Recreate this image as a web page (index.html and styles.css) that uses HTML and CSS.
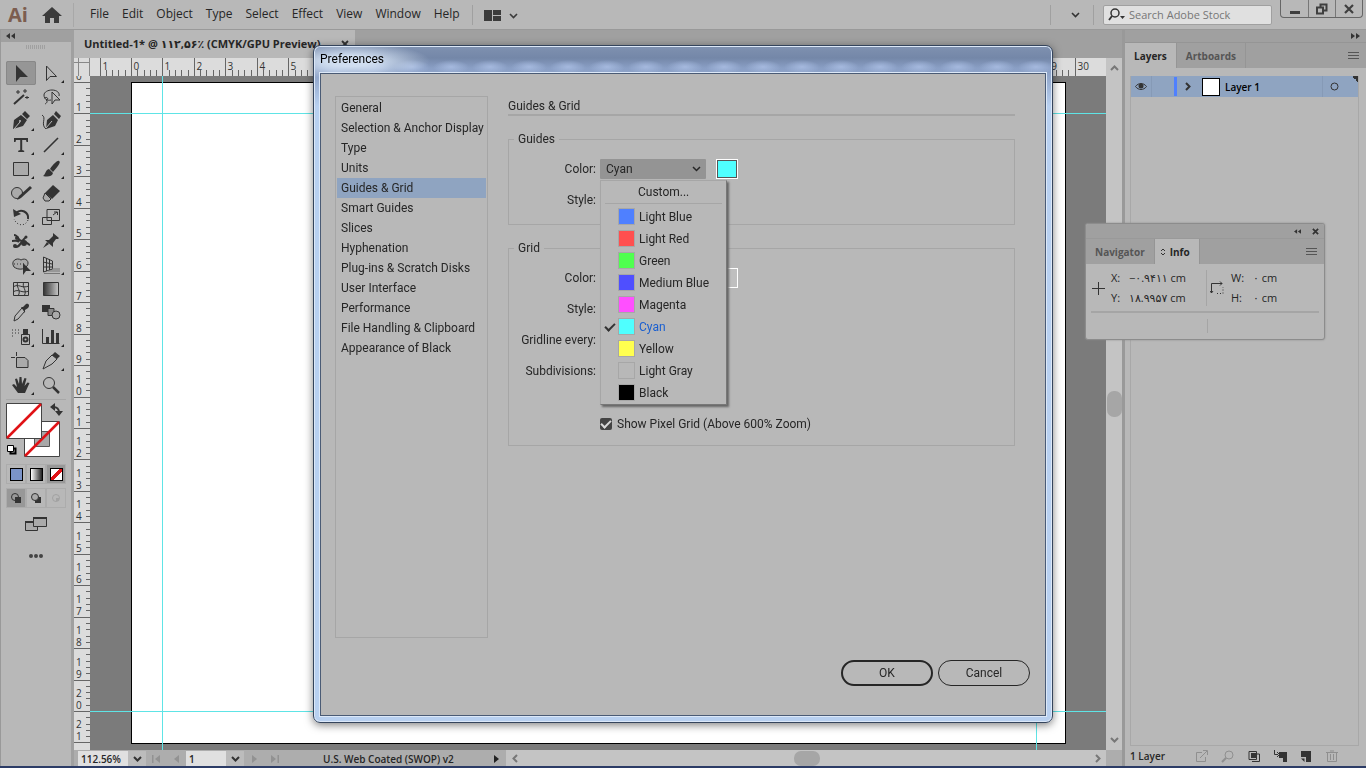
FILE: index.html
```html
<!DOCTYPE html>
<html lang="en">
<head>
    <meta charset="UTF-8">
    <meta name="viewport" content="width=device-width, initial-scale=1.0">
    <title>Untitled-1 - Preferences</title>
    <link rel="stylesheet" href="styles.css">
</head>
<body>
    <!-- Menu bar -->
    <header class="menubar">
        <span class="logo">Ai</span>
        <button class="home" aria-label="Home"><svg width="20" height="18" viewBox="0 0 20 18"><path d="M10 1L0 10h3v7h5v-5h4v5h5v-7h3z" fill="#3b3b3b"/></svg></button>
        <nav class="menus">
            <a href="#">File</a>
            <a href="#">Edit</a>
            <a href="#">Object</a>
            <a href="#">Type</a>
            <a href="#">Select</a>
            <a href="#">Effect</a>
            <a href="#">View</a>
            <a href="#">Window</a>
            <a href="#">Help</a>
        </nav>
        <button class="arrange" aria-label="Arrange documents"><svg width="34" height="12" viewBox="0 0 34 12"><path d="M0 1h8v11H0zM9 1h8v5H9zM9 7h8v5H9z" fill="#3b3b3b"/><path d="M26 5l3.500 3.500L33 5" fill="none" stroke="#3b3b3b" stroke-width="1.600"/></svg></button>
        <div class="menubar-right">
            <button class="workspace" aria-label="Workspace"><svg width="9" height="6" viewBox="0 0 9 6"><path d="M1 1l3.500 3.500L8 1" fill="none" stroke="#333" stroke-width="1.600"/></svg></button>
            <label class="search">
                <svg width="18" height="13" viewBox="0 0 18 13"><circle cx="7" cy="5" r="4" fill="none" stroke="#333" stroke-width="1.500"/><path d="M4 8l-3 4" stroke="#333" stroke-width="1.800"/><path d="M12 8h5l-2.500 3z" fill="#333"/></svg>
                <input type="text" placeholder="Search Adobe Stock" aria-label="Search Adobe Stock">
            </label>
            <div class="window-buttons">
                <button aria-label="Minimize"><svg width="12" height="12" viewBox="0 0 12 12"><path d="M1 8h10v3H1z" fill="#3f3f3f"/></svg></button>
                <button aria-label="Restore"><svg width="12" height="12" viewBox="0 0 12 12"><path d="M1 4.500h6v6H1zM4.500 4V1.500h6v6H8" fill="none" stroke="#3f3f3f" stroke-width="2"/></svg></button>
                <button aria-label="Close"><svg width="12" height="12" viewBox="0 0 12 12"><path d="M2 2l8 8M10 2l-8 8" stroke="#3f3f3f" stroke-width="2.200"/></svg></button>
            </div>
        </div>
    </header>

    <main class="workspace-area">
        <!-- Toolbar -->
        <aside class="toolbar">
            <div class="collapse-bar"><svg width="9" height="6" viewBox="0 0 9 6"><path d="M4 0v6L0 3zM9 0v6L5 3z" fill="#333"/></svg></div>
            <div class="grip"></div>
            <div class="tools">
                <button class="tool selected" aria-label="Selection"><svg viewBox="0 0 30 24"><path d="M10 4v17l4-5 8 0z" fill="#333"/></svg></button>
                <button class="tool more" aria-label="Direct selection"><svg viewBox="0 0 30 24"><path d="M10.500 5v14.500l3.500-4h6.500z" class="line"/></svg></button>
                <button class="tool" aria-label="Magic wand"><svg viewBox="0 0 30 24"><path d="M8 19l10-9" stroke="#333" stroke-width="2"/><path d="M12 5v4M10 7h4M19 4v4M17 6h4M21 11v3M19 12.500h4" class="line"/></svg></button>
                <button class="tool" aria-label="Lasso"><svg viewBox="0 0 30 24"><path d="M16 7v12l3-4h5zM15 15c-4 1-7-1-7-5 0-3 4-5 8-5 5 0 8 3 7 6M8 13c4-2 5 2 2 2 2 1 1 3-1 4" class="line"/></svg></button>
                <button class="tool more" aria-label="Pen"><svg viewBox="0 0 30 24"><path d="M7 20l1-9 7-5 6 5-4 6zM16 5l3-3 5 5-3 3z" fill="#333"/><path d="M8 20l6-7" stroke="#bbb"/><circle cx="14" cy="12" r="1" fill="#bbb"/></svg></button>
                <button class="tool" aria-label="Curvature"><svg viewBox="0 0 30 24"><path d="M10 20l1-9 6-5 5 5-3 6zM18 5l2-3 5 5-2 3z" fill="#333"/><path d="M10 19l6-7" stroke="#bbb"/><path d="M6 6c5 3-2 9 4 14" class="line"/></svg></button>
                <button class="tool more" aria-label="Type"><svg viewBox="0 0 30 24"><path d="M8 5h14v4h-1.500l-.5-2h-3.800v10l2 .7V19h-6v-1.300l2-.7V7H10l-.5 2H8z" fill="#333"/></svg></button>
                <button class="tool more" aria-label="Line segment"><svg viewBox="0 0 30 24"><path d="M8 19L22 5" stroke="#333" stroke-width="1.600"/></svg></button>
                <button class="tool more" aria-label="Rectangle"><svg viewBox="0 0 30 24"><path d="M7.500 5.500h15v13h-15z" class="line" fill="#a8a8a8"/></svg></button>
                <button class="tool more" aria-label="Paintbrush"><svg viewBox="0 0 30 24"><path d="M23 4c2 1 0 4-6 11l-3-3c4-6 8-9 9-8zM13 12l4 4c-1 4-6 4-10 3 3-2 2-6 6-7z" fill="#333"/></svg></button>
                <button class="tool more" aria-label="Shaper"><svg viewBox="0 0 30 24"><circle cx="11" cy="12" r="5.500" class="line" fill="#a8a8a8"/><path d="M11 19l2-4 11-10 2 2-11 10z" fill="#333"/></svg></button>
                <button class="tool more" aria-label="Eraser"><svg viewBox="0 0 30 24"><path d="M17 4l7 6-8 8-7-6z" fill="#333"/><path d="M9 12l6 6-2 2H9l-2-3z" class="line" fill="#ccc"/></svg></button>
                <button class="tool more" aria-label="Rotate"><svg viewBox="0 0 30 24"><path d="M10 8c5-5 13-1 12 6" class="line thick"/><path d="M7 4l1 8 7-3z" fill="#333"/><path d="M22 15c-3 7-11 6-14-1" class="line dots"/></svg></button>
                <button class="tool more" aria-label="Scale"><svg viewBox="0 0 30 24"><path d="M11 4.500h12.500v11H11zM6.500 12.500h9v7h-9zM17 10l4-3M18 7h3.500v3" class="line"/></svg></button>
                <button class="tool more" aria-label="Width"><svg viewBox="0 0 30 24"><path d="M8 6c5 0 3 6 8 6s5 3 8 4M6 12c4 0 5-1 7 1M9 18c5 1 5-5 11-10" class="line thick"/><circle cx="11" cy="9" r="2" fill="#333"/><circle cx="9" cy="17" r="2" fill="#333"/><circle cx="18" cy="14" r="3" fill="#333"/><circle cx="20" cy="8" r="1.500" fill="#333"/></svg></button>
                <button class="tool more" aria-label="Puppet warp"><svg viewBox="0 0 30 24"><path d="M17 4l6 5-1 1h-2l-3 4v4l-8-7h4l4-4V5zM11 13l-4 6 6-4z" fill="#333"/></svg></button>
                <button class="tool more" aria-label="Shape builder"><svg viewBox="0 0 30 24"><path d="M8 14c-4-6 3-10 7-7 5-3 9 2 6 6-3 4-9 4-13 1z" class="line" fill="#aaa"/><path d="M8 11h11" class="line dots"/><path d="M17 10v12l3-4h5z" fill="#333"/></svg></button>
                <button class="tool more" aria-label="Perspective grid"><svg viewBox="0 0 30 24"><path d="M7.500 4v15l9-3V8zM10.500 5v13M13.500 6v11M7 9l9 2M7 14h9" class="line"/><path d="M16 16h8M12 18h12M8 20.500h16" stroke="#777"/></svg></button>
                <button class="tool" aria-label="Mesh"><svg viewBox="0 0 30 24"><path d="M7.500 5.500h15v13h-15zM12 5c-3 5 4 8 0 14M18 5c-3 5 4 8 0 14M7 10c6-4 8 2 16-1M7 15c6-4 8 2 16-1" class="line"/></svg></button>
                <button class="tool" aria-label="Gradient"><svg viewBox="0 0 30 24"><defs><linearGradient id="g"><stop offset="0" stop-color="#333"/><stop offset="1" stop-color="#c8c8c8"/></linearGradient></defs><path d="M7.500 5.500h15v13h-15z" fill="url(#g)" stroke="#333"/></svg></button>
                <button class="tool more" aria-label="Eyedropper"><svg viewBox="0 0 30 24"><path d="M9 15l7-8 3 3-7 8-4 2z" class="line"/><path d="M15 6h2l3-3c3-1 4 2 2 4l-3 2v3z" fill="#333"/></svg></button>
                <button class="tool" aria-label="Blend"><svg viewBox="0 0 30 24"><path d="M6 4h8v7H6z" fill="#333"/><path d="M12 7.500h6v7h-6z" fill="#888" stroke="#333"/><circle cx="20" cy="14" r="4" class="line" fill="#b8b8b8"/></svg></button>
                <button class="tool more" aria-label="Symbol sprayer"><svg viewBox="0 0 30 24"><path d="M15.500 9.500h8v10h-8z" class="line"/><path d="M17 4h5v5h-5z" fill="#333"/><circle cx="19.500" cy="14.500" r="2" class="line thick"/><path d="M6 5h9M6 8h8M6 11h3" class="line dots"/></svg></button>
                <button class="tool more" aria-label="Column graph"><svg viewBox="0 0 30 24"><path d="M6.500 4v14.500h17" class="line"/><path d="M10 12h3v6h-3zM15 5h3v13h-3zM20 8h3v10h-3z" fill="#333"/></svg></button>
                <button class="tool" aria-label="Artboard"><svg viewBox="0 0 30 24"><path d="M10.500 8.500H19l3 3v7H10.500z" class="line" fill="#aaa"/><path d="M5 8.500h4M10.500 3v4" class="line"/></svg></button>
                <button class="tool more" aria-label="Slice"><svg viewBox="0 0 30 24"><path d="M7 20l3-8 6-6 5 4-5 5z" class="line"/><path d="M16 6l3-3 5 4-3 3z" fill="#333"/></svg></button>
                <button class="tool more" aria-label="Hand"><svg viewBox="0 0 30 24"><path d="M12 20l-6-8 2-1 3 3L9 6l2-.5L13 11l.5-7h2l.5 7 2.500-6 2 .5L18.500 13l3-3.500 2 .5-4.500 10z" fill="#333"/></svg></button>
                <button class="tool" aria-label="Zoom"><svg viewBox="0 0 30 24"><circle cx="13" cy="10" r="5.500" class="line"/><path d="M17 14l6 6" stroke="#333" stroke-width="2.500"/></svg></button>
            </div>
            <!-- Fill and stroke -->
            <svg class="fill-stroke" width="60" height="60" viewBox="0 0 60 60">
                <path d="M18.500 20.500h35v35h-35z" fill="#fff" stroke="#444"/>
                <path d="M28.500 30.500h15v15h-15z" fill="#a8a8a8" stroke="#555"/>
                <path d="M19 55L53 21" stroke="#e01216" stroke-width="2.500"/>
                <path d="M.5 2.500h35v35H.5z" fill="#fff" stroke="#444"/>
                <path d="M1 37L35 3" stroke="#e01216" stroke-width="2.500"/>
                <path d="M47 6c4 0 6 1 6 6" fill="none" stroke="#333" stroke-width="2"/><path d="M44 6l5-4v8zM49 10h8l-4 5z" fill="#333"/>
                <path d="M4.500 47.500h5v5h-5z" fill="none" stroke="#000" stroke-width="2"/><path d="M1.500 44.500h6v6h-6z" fill="#fff" stroke="#000"/>
            </svg>
            <div class="paint-modes">
                <button aria-label="Color"><span class="chip chip-color"></span></button>
                <button aria-label="Gradient fill"><span class="chip chip-gradient"></span></button>
                <button class="active" aria-label="None"><span class="chip chip-none"></span></button>
            </div>
            <div class="draw-modes">
                <button class="active" aria-label="Draw normal"><svg width="12" height="12" viewBox="0 0 12 12"><circle cx="5" cy="5" r="3.500" class="line"/><path d="M5 5h6v6H5z" fill="#333"/></svg></button>
                <button aria-label="Draw behind"><svg width="12" height="12" viewBox="0 0 12 12"><path d="M5 5h6v6H5z" fill="#333"/><circle cx="5" cy="5" r="3.500" class="line" fill="#aaa"/></svg></button>
                <button aria-label="Draw inside"><svg width="12" height="12" viewBox="0 0 12 12"><circle cx="6" cy="6" r="3.500" fill="none" stroke="#a2a2a2"/><path d="M6 6h3v3H6z" fill="#a2a2a2"/></svg></button>
            </div>
            <button class="screen-mode" aria-label="Screen mode"><svg width="22" height="16" viewBox="0 0 22 16"><path d="M.5 5.500h12v9H.5z" class="line" fill="#aaa"/><path d="M0 5h8v2H0z" fill="#333"/><path d="M8.500 1.500h13v9h-13z" class="line" fill="#aaa"/><path d="M8 1h14v2H8z" fill="#333"/></svg></button>
            <button class="dots-more" aria-label="Edit toolbar"><svg width="14" height="4" viewBox="0 0 14 4"><path d="M0 2a2 2 0 1 1 4 0a2 2 0 1 1-4 0M5 2a2 2 0 1 1 4 0a2 2 0 1 1-4 0M10 2a2 2 0 1 1 4 0a2 2 0 1 1-4 0" fill="#444"/></svg></button>
        </aside>

        <!-- Document -->
        <section class="document">
            <div class="doc-tabs">
                <div class="doc-tab">
                    <span>Untitled-1* @ ۱۱۲,۵۶٪ (CMYK/GPU Preview)</span>
                    <button aria-label="Close document"><svg width="8" height="8" viewBox="0 0 8 8"><path d="M1 1l6 6M7 1L1 7" stroke="#333" stroke-width="1.800"/></svg></button>
                </div>
            </div>
            <div class="doc-body">
                <div class="ruler-row">
                    <div class="ruler-corner"></div>
                    <svg class="ruler" id="rulerX"></svg>
                </div>
                <svg class="ruler" id="rulerY"></svg>
                <div class="canvas">
                    <div class="artboard"></div>
                    <div class="guide guide-left"></div>
                    <div class="guide guide-right"></div>
                    <div class="guide guide-top"></div>
                    <div class="guide guide-bottom"></div>
                </div>
                <div class="scroll-y">
                    <svg width="9" height="6" viewBox="0 0 9 6"><path d="M1 5l3.500-3.500L8 5" class="arrow"/></svg>
                    <span class="thumb"></span>
                    <svg width="9" height="6" viewBox="0 0 9 6"><path d="M1 1l3.500 3.500L8 1" class="arrow"/></svg>
                </div>
            </div>
            <footer class="status">
                <input class="zoom-field" type="text" value="112.56%" aria-label="Zoom">
                <button class="drop" aria-label="Zoom levels"><svg width="9" height="6" viewBox="0 0 9 6"><path d="M1 1l3.500 3.500L8 1" class="arrow dark"/></svg></button>
                <button class="step" aria-label="First"><svg width="9" height="8" viewBox="0 0 9 8"><path d="M0 0h1.500v8H0zM8 0v8L3 4z" fill="#929292"/></svg></button>
                <button class="step" aria-label="Previous"><svg width="9" height="8" viewBox="0 0 9 8"><path d="M7 0v8L2 4z" fill="#929292"/></svg></button>
                <input class="page-field" type="text" value="1" aria-label="Artboard number">
                <button class="drop" aria-label="Artboards list"><svg width="9" height="6" viewBox="0 0 9 6"><path d="M1 1l3.500 3.500L8 1" class="arrow dark"/></svg></button>
                <button class="step" aria-label="Next"><svg width="9" height="8" viewBox="0 0 9 8"><path d="M2 0v8l5-4z" fill="#929292"/></svg></button>
                <button class="step" aria-label="Last"><svg width="9" height="8" viewBox="0 0 9 8"><path d="M7.500 0H9v8H7.500zM1 0v8l5-4z" fill="#929292"/></svg></button>
                <span class="profile">U.S. Web Coated (SWOP) v2</span>
                <button class="status-menu" aria-label="Status menu"><svg width="6" height="8" viewBox="0 0 6 8"><path d="M0 0v8l5-4z" fill="#222"/></svg></button>
                <div class="scroll-x">
                    <svg width="6" height="9" viewBox="0 0 6 9"><path d="M5 1L1.500 4.500 5 8" class="arrow"/></svg>
                    <span class="thumb"></span>
                    <svg width="6" height="9" viewBox="0 0 6 9"><path d="M1 1l3.500 3.500L1 8" class="arrow"/></svg>
                </div>
                <div class="scroll-corner"></div>
            </footer>
        </section>

        <!-- Layers panel -->
        <aside class="panel">
            <div class="collapse-bar right"><svg width="9" height="6" viewBox="0 0 9 6"><path d="M0 0v6l4-3zM5 0v6l4-3z" fill="#333"/></svg></div>
            <div class="panel-tabs">
                <button class="active">Layers</button>
                <button>Artboards</button>
                <svg class="burger" width="11" height="9" viewBox="0 0 11 9"><path d="M0 1.500h11M0 4.500h11M0 7.500h11" stroke="#555"/></svg>
            </div>
            <div class="layers">
                <div class="layer">
                    <svg width="20" height="21" viewBox="0 0 20 21"><path d="M4.500 10.500c3-4 8-4 11 0-3 4-8 4-11 0z" class="line"/><circle cx="10" cy="10" r="2.500" fill="#333"/></svg>
                    <span class="lock"></span>
                    <span class="layer-color"></span>
                    <svg width="6" height="9" viewBox="0 0 6 9"><path d="M1 1l3.500 3.500L1 8" class="arrow dark"/></svg>
                    <span class="layer-thumb"></span>
                    <span class="layer-name">Layer 1</span>
                    <span class="target"><svg width="9" height="9" viewBox="0 0 9 9"><circle cx="4.500" cy="4.500" r="3.500" class="line"/></svg></span>
                </div>
            </div>
            <footer class="panel-footer">
                <span>1 Layer</span>
                <div class="panel-actions">
                    <svg class="dim" viewBox="0 0 14 14"><path d="M7 3.500H1.500v9h9V8M5 9l7-7M8 1.500h4.500V6" class="line"/></svg>
                    <svg class="dim" viewBox="0 0 14 14"><circle cx="8" cy="6" r="4" class="line"/><path d="M5 9l-4 4" class="line thick"/></svg>
                    <svg viewBox="0 0 14 14"><path d="M2 2.500h7.500v8H2zM5 5h7.500v7.500H5" class="line"/><path d="M4 4h5v5H4z" fill="#333"/></svg>
                    <svg viewBox="0 0 14 14"><path d="M1.500 1v4.500H5M4 3l2.500 2.500L4 8" class="line"/><path d="M6 3h8v10h-4V9H6z" fill="#333"/></svg>
                    <svg viewBox="0 0 14 14"><path d="M2 2h10v11H7V8H2z" fill="#333"/><path d="M2 9.500h3.500V13z" fill="#333"/></svg>
                    <svg class="dim" viewBox="0 0 14 14"><path d="M1 3.500h12M2.500 4v8.500h9V4M5 2h4M5.500 5v6M8.500 5v6" class="line"/></svg>
                </div>
            </footer>
        </aside>
    </main>
    <div class="taskbar-edge"></div>

    <!-- Floating info panel -->
    <section class="info-panel">
        <div class="info-top">
            <svg width="7" height="5" viewBox="0 0 9 6"><path d="M4 0v6L0 3zM9 0v6L5 3z" fill="#333"/></svg>
            <svg width="7" height="7" viewBox="0 0 8 8"><path d="M1 1l6 6M7 1L1 7" stroke="#333" stroke-width="2"/></svg>
        </div>
        <div class="info-tabs">
            <button>Navigator</button>
            <button class="active"><svg width="6" height="8" viewBox="0 0 6 8"><path d="M1 3l2-2 2 2M1 5l2 2 2-2" class="line"/></svg>Info</button>
            <svg class="burger" width="11" height="9" viewBox="0 0 11 9"><path d="M0 1.500h11M0 4.500h11M0 7.500h11" stroke="#555"/></svg>
        </div>
        <div class="info-body">
            <svg width="13" height="13" viewBox="0 0 13 13"><path d="M6.500 0v13M0 6.500h13" class="line"/></svg>
            <dl class="position">
                <dt>X:</dt><dd>−۰.۹۴۱۱ cm</dd>
                <dt>Y:</dt><dd>۱۸.۹۹۵۷ cm</dd>
            </dl>
            <svg class="size-icon" width="14" height="14" viewBox="0 0 14 14"><path d="M1.500 12V2.500H12M10 .5l2 2-2 2M0 10l1.500 2L3 10" class="line"/><path d="M7 12.500h6V6" class="line dots"/></svg>
            <dl class="size">
                <dt>W:</dt><dd>۰ cm</dd>
                <dt>H:</dt><dd>۰ cm</dd>
            </dl>
        </div>
        <div class="info-extra"></div>
    </section>

    <!-- Preferences dialog -->
    <div class="overlay">
        <div class="dialog" role="dialog" aria-labelledby="dialogTitle">
            <h1 class="dialog-title" id="dialogTitle">Preferences</h1>
            <form class="dialog-body">
                <div class="dialog-main">
                    <ul class="categories">
                        <li><a href="#">General</a></li>
                        <li><a href="#">Selection &amp; Anchor Display</a></li>
                        <li><a href="#">Type</a></li>
                        <li><a href="#">Units</a></li>
                        <li><a href="#" class="active">Guides &amp; Grid</a></li>
                        <li><a href="#">Smart Guides</a></li>
                        <li><a href="#">Slices</a></li>
                        <li><a href="#">Hyphenation</a></li>
                        <li><a href="#">Plug-ins &amp; Scratch Disks</a></li>
                        <li><a href="#">User Interface</a></li>
                        <li><a href="#">Performance</a></li>
                        <li><a href="#">File Handling &amp; Clipboard</a></li>
                        <li><a href="#">Appearance of Black</a></li>
                    </ul>
                    <div class="settings">
                        <h2>Guides &amp; Grid</h2>
                        <fieldset class="guides-group">
                            <legend>Guides</legend>
                            <div class="row">
                                <label for="guideColor">Color:</label>
                                <div class="select-wrap">
                                    <select id="guideColor"><option>Cyan</option></select>
                                    <svg class="chevron" width="9" height="6" viewBox="0 0 9 6"><path d="M1 1l3.500 3.500L8 1" fill="none" stroke="#262626" stroke-width="1.500"/></svg>
                                    <ul class="color-menu">
                                        <li class="custom"><button type="button">Custom...</button></li>
                                        <li><button type="button"><i class="sw light-blue"></i>Light Blue</button></li>
                                        <li><button type="button"><i class="sw light-red"></i>Light Red</button></li>
                                        <li><button type="button"><i class="sw green"></i>Green</button></li>
                                        <li><button type="button"><i class="sw medium-blue"></i>Medium Blue</button></li>
                                        <li><button type="button"><i class="sw magenta"></i>Magenta</button></li>
                                        <li class="checked"><button type="button"><i class="sw cyan"></i>Cyan</button></li>
                                        <li><button type="button"><i class="sw yellow"></i>Yellow</button></li>
                                        <li><button type="button"><i class="sw light-gray"></i>Light Gray</button></li>
                                        <li><button type="button"><i class="sw black"></i>Black</button></li>
                                    </ul>
                                </div>
                                <button type="button" class="swatch cyan" aria-label="Guide color"></button>
                            </div>
                            <div class="row"><span class="label">Style:</span></div>
                        </fieldset>
                        <fieldset class="grid-group">
                            <legend>Grid</legend>
                            <div class="row">
                                <span class="label">Color:</span>
                                <div class="select-wrap"></div>
                                <button type="button" class="swatch gray" aria-label="Grid color"></button>
                            </div>
                            <div class="row"><span class="label">Style:</span></div>
                            <div class="row"><span class="label">Gridline every:</span></div>
                            <div class="row"><span class="label">Subdivisions:</span></div>
                            <div class="check-row">
                                <input type="checkbox" id="pixelGrid" checked>
                                <label for="pixelGrid">Show Pixel Grid (Above 600% Zoom)</label>
                            </div>
                        </fieldset>
                    </div>
                </div>
                <div class="dialog-buttons">
                    <button type="button" class="btn btn-ok">OK</button>
                    <button type="button" class="btn">Cancel</button>
                </div>
            </form>
        </div>
    </div>

    <script src="script.js"></script>
</body>
</html>
```
FILE: styles.css
```css
/* Reset and base styles */
* {
    margin: 0;
    padding: 0;
    box-sizing: border-box;
}

body {
    height: 100vh;
    display: flex;
    flex-direction: column;
    overflow: hidden;
    background-color: #b8b8b8;
    color: #262626;
    font-family: "Open Sans", "Noto Sans", "DejaVu Sans", sans-serif;
    font-size: 12px;
    line-height: 16px;
}

button, input, select {
    font: inherit;
    color: inherit;
    background: none;
    border: none;
}

a {
    color: inherit;
    text-decoration: none;
}

ul {
    list-style: none;
}

svg {
    display: block;
    flex: none;
}

.line {
    fill: none;
    stroke: #333;
}

.line[fill] {
    fill: #aaa;
}

.thick {
    stroke-width: 2;
}

.dots {
    stroke-dasharray: 1 2;
}

.arrow {
    fill: none;
    stroke: #777;
    stroke-width: 2;
}

.arrow.dark {
    stroke: #333;
}

/* Menu bar */
.menubar {
    height: 30px;
    flex: none;
    display: flex;
    align-items: center;
    padding-left: 8px;
    border-bottom: 1px solid #999;
}

.logo {
    width: 34px;
    color: #7c5d4f;
    font-size: 20px;
    font-weight: bold;
    line-height: 24px;
}

.home {
    padding-right: 11px;
}

.menus {
    display: flex;
    gap: 13px;
    height: 24px;
    align-items: center;
    padding: 0 12px 2px 16px;
    border-left: 1px solid #a8a8a8;
}

.arrange {
    height: 20px;
    padding-left: 11px;
    border-left: 1px solid #a0a0a0;
}

.menubar-right {
    margin-left: auto;
    display: flex;
    align-items: center;
    align-self: stretch;
    padding-right: 3px;
}

.workspace {
    height: 20px;
    padding: 0 13px 0 20px;
    border-left: 1px solid #a0a0a0;
    border-right: 1px solid #a0a0a0;
}

.search {
    width: 169px;
    height: 20px;
    margin: 0 8px 0 9px;
    padding-left: 4px;
    display: flex;
    align-items: center;
    gap: 3px;
    background-color: #e0e0e0;
    border: 1px solid #a0a0a0;
    border-radius: 2px;
    font-size: 11px;
}

.search input {
    width: 130px;
}

.search input::placeholder {
    color: #777;
    opacity: 1;
}

.window-buttons {
    display: flex;
    align-self: flex-start;
    height: 18px;
    border: 1px solid #666;
    border-top: none;
    border-radius: 0 0 4px 4px;
}

.window-buttons button {
    width: 27px;
    display: grid;
    place-items: center;
}

.window-buttons button + button {
    border-left: 1px solid #777;
}

/* Main content */
.workspace-area {
    flex: 1;
    min-height: 0;
    display: flex;
}

.collapse-bar {
    height: 12px;
    padding: 3px 5px;
    background-color: #a0a0a0;
}

.collapse-bar.right {
    display: flex;
    justify-content: flex-end;
    padding-right: 6px;
}

/* Toolbar */
.toolbar {
    width: 74px;
    flex: none;
    border-left: 1px solid #999;
    border-right: 3px solid #a0a0a0;
    display: flex;
    flex-direction: column;
}

.grip {
    width: 20px;
    height: 4px;
    margin: 3px 0 12px 25px;
    background: repeating-linear-gradient(90deg, #a0a0a0 0 1px, transparent 1px 2px);
}

.tools {
    display: grid;
    grid-template-columns: 30px 30px;
    grid-auto-rows: 24px;
    margin: 0 5px;
    padding-bottom: 2px;
    border-bottom: 1px solid #a8a8a8;
}

.tool {
    position: relative;
}

.tool.selected {
    background-color: #969696;
    outline: 1px solid #888;
    outline-offset: -1px;
    border-radius: 2px;
}

.tool.more::after {
    content: "";
    position: absolute;
    right: 2px;
    bottom: 2px;
    border-left: 3px solid transparent;
    border-bottom: 3px solid #222;
}

.fill-stroke {
    margin: 1px 5px 3px;
}

.paint-modes, .draw-modes {
    display: grid;
    grid-template-columns: repeat(3, 20px);
    grid-auto-rows: 20px;
    margin: 0 5px 4px;
}

.paint-modes button, .draw-modes button {
    display: grid;
    place-items: center;
    border: 1px solid #acacac;
}

.paint-modes .active, .draw-modes .active {
    background-color: #989898;
}

.chip {
    width: 13px;
    height: 13px;
    border: 1px solid #000;
}

.chip-color {
    background-color: #7b93c8;
}

.chip-gradient {
    background: linear-gradient(90deg, #fff, #222);
}

.chip-none {
    background: linear-gradient(135deg, #fff 38%, #e01216 38% 62%, #fff 62%);
}

.screen-mode {
    align-self: center;
    margin: 4px 0 22px;
}

.dots-more {
    align-self: center;
}

/* Document */
.document {
    flex: 1;
    min-width: 0;
    display: flex;
    flex-direction: column;
}

.doc-tabs {
    height: 28px;
    flex: none;
    display: flex;
    background-color: #a0a0a0;
}

.doc-tab {
    width: 281px;
    padding: 0 6px 0 10px;
    display: flex;
    align-items: center;
    justify-content: space-between;
    background-color: #b8b8b8;
    font-size: 11px;
    font-weight: bold;
    white-space: nowrap;
}

.doc-body {
    flex: 1;
    min-height: 0;
    display: grid;
    grid-template-columns: 16px 1fr 16px;
    grid-template-rows: 18px 1fr;
}

.ruler-row {
    grid-column: 1 / 3;
    display: flex;
    background-color: #dcdcdc;
}

.ruler-corner {
    width: 16px;
    background: linear-gradient(#888, #888) 4px 0 / 1px 100% no-repeat, linear-gradient(#888, #888) 0 4px / 100% 1px no-repeat;
    border-right: 1px solid #888;
}

.ruler {
    width: 100%;
    height: 100%;
    min-width: 0;
    flex: 1;
    background-color: #dcdcdc;
    overflow: hidden;
    font-size: 10px;
}

.ruler path {
    stroke: #666;
}

.ruler text {
    fill: #333;
}

.canvas {
    position: relative;
    display: flex;
    padding: 6px 40px 6px 41px;
    background-color: #7b7b7b;
}

.artboard {
    flex: 1;
    background-color: #fff;
    border: 1px solid #000;
}

.guide {
    position: absolute;
    background-color: #5ee4e6;
}

.guide-left, .guide-right {
    width: 1px;
    top: 0;
    bottom: 0;
}

.guide-left {
    left: 72px;
}

.guide-right {
    right: 69px;
}

.guide-top, .guide-bottom {
    height: 1px;
    left: 0;
    right: 0;
}

.guide-top {
    top: 37px;
}

.guide-bottom {
    bottom: 38px;
}

.scroll-y {
    grid-column: 3;
    grid-row: 1 / 3;
    display: flex;
    flex-direction: column;
    align-items: center;
    justify-content: space-between;
    padding: 7px 0;
    background-color: #c4c4c4;
}

.thumb {
    width: 15px;
    height: 26px;
    border-radius: 7px;
    background-color: #a6a6a6;
}

/* Status bar */
.status {
    height: 16px;
    flex: none;
    display: flex;
    align-items: flex-end;
    padding-left: 4px;
    background-color: #adadad;
    font-size: 10px;
    font-weight: 600;
}

.status input {
    height: 15px;
    padding-left: 3px;
    background-color: #e0e0e0;
}

.zoom-field {
    width: 50px;
}

.page-field {
    width: 40px;
}

.drop {
    width: 18px;
    height: 15px;
    display: grid;
    place-items: center;
    background-color: #bcbcbc;
}

.step {
    width: 20px;
    height: 15px;
    display: grid;
    place-items: center;
}

.profile {
    width: 210px;
    padding-left: 39px;
    line-height: 14px;
    white-space: nowrap;
}

.status-menu {
    width: 12px;
    height: 15px;
}

.scroll-x {
    flex: 1;
    align-self: stretch;
    display: flex;
    align-items: center;
    justify-content: space-between;
    padding: 0 5px 0 6px;
    background-color: #c4c4c4;
}

.scroll-x .thumb {
    width: 26px;
    height: 15px;
}

.scroll-corner {
    width: 16px;
    align-self: stretch;
    background-color: #adadad;
}

/* Layers panel */
.panel {
    width: 244px;
    flex: none;
    display: flex;
    flex-direction: column;
    border-left: 3px solid #999;
}

.panel-tabs {
    height: 26px;
    display: flex;
    align-items: stretch;
    background-color: #a0a0a0;
    border-top: 1px solid #959595;
}

.panel-tabs button, .info-tabs button {
    padding: 0 9px;
    color: #555;
    font-size: 10px;
    font-weight: bold;
    border-right: 1px solid #959595;
}

.panel-tabs .active, .info-tabs .active {
    color: #262626;
    background-color: #b8b8b8;
}

.burger {
    margin-left: auto;
    margin-right: 7px;
    align-self: center;
}

.layers {
    flex: 1;
    margin: 8px 7px 0 5px;
    border: 1px solid #a8a8a8;
    border-top: none;
}

.layer {
    height: 21px;
    display: flex;
    align-items: center;
    background: linear-gradient(45deg, transparent 50%, #333 50%) right top / 6px 6px no-repeat #8fa4c1;
    font-size: 11px;
}

.lock {
    width: 23px;
    height: 21px;
    border-left: 1px solid #869ab6;
}

.layer-color {
    width: 3px;
    height: 19px;
    margin-right: 8px;
    background-color: #4f80ff;
}

.layer-thumb {
    width: 18px;
    height: 18px;
    margin: 0 5px 0 11px;
    background-color: #fff;
    border: 1px solid #000;
}

.layer-name {
    color: #000;
    font-size: 10px;
    font-weight: 600;
}

.target {
    width: 36px;
    height: 21px;
    margin-left: auto;
    padding: 6px 7px;
    border-left: 1px solid #869ab6;
}

.panel-footer {
    height: 20px;
    display: flex;
    align-items: center;
    justify-content: space-between;
    padding: 0 27px 0 5px;
    font-size: 10px;
    font-weight: 600;
}

.panel-actions {
    display: flex;
    gap: 12px;
}

.panel-actions svg {
    width: 14px;
    height: 14px;
}

.panel-actions .dim {
    opacity: 0.3;
}

.taskbar-edge {
    height: 2px;
    flex: none;
    background-color: #2c3c66;
}

/* Floating info panel */
.info-panel {
    position: absolute;
    top: 223px;
    right: 41px;
    width: 240px;
    background-color: #b8b8b8;
    border: 1px solid #8c8c8c;
    border-radius: 3px;
    box-shadow: 0 0 2px #888;
    font-size: 11px;
    overflow: hidden;
}

.info-top {
    height: 14px;
    display: flex;
    align-items: center;
    justify-content: flex-end;
    gap: 11px;
    padding-right: 5px;
    background-color: #a0a0a0;
}

.info-tabs {
    height: 26px;
    display: flex;
    background-color: #a0a0a0;
    border-top: 1px solid #999;
}

.info-tabs .active {
    display: flex;
    align-items: center;
    gap: 4px;
    padding: 0 9px 0 5px;
}

.info-body {
    display: flex;
    align-items: center;
    margin: 0 5px;
    padding: 6px 0 5px 1px;
    border-bottom: 2px solid #a5a5a5;
}

.info-body dl {
    display: grid;
    grid-template-columns: 18px auto;
    row-gap: 4px;
    white-space: nowrap;
}

.info-body .position {
    width: 96px;
    margin-left: 6px;
    margin-right: 3px;
    border-right: 1px solid #a5a5a5;
}

.info-body .size {
    grid-template-columns: 22px auto;
    margin-left: 7px;
}

.info-extra {
    width: 122px;
    height: 14px;
    margin: 6px 0;
    border-right: 1px solid #a5a5a5;
}

/* Preferences dialog */
.overlay {
    position: fixed;
    inset: 0;
    display: flex;
    align-items: center;
    justify-content: center;
    font-family: Roboto, "Noto Sans", sans-serif;
}

.dialog {
    width: 740px;
    padding: 0 6px 6px;
    border: 1px solid #34445c;
    border-radius: 7px;
    background:
        radial-gradient(ellipse 80px 18px at 36px 15px, #d0def0 30%, transparent) no-repeat,
        radial-gradient(ellipse 18px 7px at 20px 8px, #a5b9de, transparent) 0 13px / 39px 16px repeat-x,
        linear-gradient(#7f91b0, #7487a8 12px, #8a9fc5 22px, #8fa4c8 28px, #b8d0f0 60px);
    box-shadow: inset 0 0 0 1px #dce8f8, 0 2px 8px rgba(0,0,0,0.5);
}

.dialog-title {
    height: 27px;
    color: #000;
    font-size: 12px;
    font-weight: normal;
    line-height: 27px;
}

.dialog-body {
    padding: 22px 15px 29px 14px;
    background-color: #b8b8b8;
    border: 1px solid #4a5b75;
    box-shadow: 0 0 0 1px #dce8f8;
}

.dialog-main {
    display: flex;
    gap: 20px;
}

.categories {
    width: 153px;
    min-height: 542px;
    padding: 1px;
    border: 1px solid #a6a6a6;
}

.categories a {
    display: block;
    height: 20px;
    padding-left: 4px;
    line-height: 20px;
    white-space: nowrap;
}

.categories .active {
    background-color: #8fa4c1;
}

.settings {
    flex: 1;
    margin-right: 15px;
}

.settings h2 {
    height: 20px;
    margin-bottom: 15px;
    font-size: 12px;
    font-weight: normal;
    line-height: 20px;
    border-bottom: 2px solid #a6a6a6;
}

fieldset {
    border: 1px solid #a6a6a6;
}

legend {
    margin-left: 5px;
    padding: 0 4px;
}

.guides-group {
    height: 94px;
    margin-bottom: 15px;
}

.grid-group {
    height: 206px;
}

.row {
    height: 31px;
    display: flex;
    align-items: center;
}

fieldset .row:first-of-type {
    margin-top: 6px;
}

.row label, .label {
    width: 87px;
    margin-right: 4px;
    text-align: right;
}

.select-wrap {
    position: relative;
    width: 106px;
    margin-right: 10px;
}

.select-wrap select {
    display: block;
    width: 106px;
    height: 20px;
    padding-left: 6px;
    appearance: none;
    border-radius: 1px;
    background-color: #949494;
}

.chevron {
    position: absolute;
    right: 5px;
    top: 7px;
    pointer-events: none;
}

.color-menu {
    position: absolute;
    left: 0;
    top: 21px;
    width: 127px;
    z-index: 2;
    background-color: #b8b8b8;
    border: 1px solid #a6a6a6;
    border-color: #a6a6a6 #777 #777 #a6a6a6;
    box-shadow: 2px 2px 2px #666;
}

.color-menu li {
    position: relative;
    height: 22px;
}

.color-menu .custom {
    height: 23px;
    margin: 0 4px 2px;
    padding-left: 15px;
    border-bottom: 1px solid #a6a6a6;
}

.color-menu button {
    width: 100%;
    height: 22px;
    display: flex;
    align-items: center;
    gap: 5px;
    padding-left: 18px;
    white-space: nowrap;
}

.color-menu .checked {
    color: #1a5fd0;
}

.color-menu .checked::before {
    content: "";
    position: absolute;
    left: 6px;
    top: 5px;
    width: 4px;
    height: 8px;
    border: solid #333;
    border-width: 0 2px 2px 0;
    transform: rotate(45deg);
}

.sw {
    width: 15px;
    height: 15px;
    flex: none;
    outline: 1px solid rgba(130,130,130,0.3);
}

.swatch {
    width: 22px;
    height: 20px;
    border: 1px solid #fff;
    outline: 1px solid #555;
    outline-offset: -2px;
}

.light-blue { background-color: #4f80ff; }
.light-red { background-color: #ff4f4f; }
.green { background-color: #4fff4f; }
.medium-blue { background-color: #4f4fff; }
.magenta { background-color: #ff4fff; }
.cyan { background-color: #4fffff; }
.yellow { background-color: #ffff4f; }
.light-gray { background-color: #b8b8b8; }
.black { background-color: #000; }

.swatch.gray {
    background-color: #bfbfbf;
    outline: none;
}

.check-row {
    display: flex;
    align-items: center;
    gap: 5px;
    margin: 30px 0 0 91px;
}

.check-row input {
    width: 12px;
    height: 12px;
    appearance: none;
    display: grid;
    place-items: center;
    background-color: #444;
    border-radius: 2px;
}

.check-row input:checked::before {
    content: "";
    width: 4px;
    height: 8px;
    margin-bottom: 2px;
    border: solid #d8d8d8;
    border-width: 0 2px 2px 0;
    transform: rotate(45deg);
}

.dialog-buttons {
    display: flex;
    justify-content: flex-end;
    gap: 5px;
    margin-top: 22px;
}

/* Buttons */
.btn {
    width: 92px;
    height: 26px;
    border: 1px solid #262626;
    border-radius: 13px;
}

.btn-ok {
    border-width: 2px;
}
```
FILE: script.js
```javascript
// Pixels per centimetre at the current zoom
const UNIT = 31.45;

function drawRuler(id, origin, from, to, vertical) {
    const ruler = document.getElementById(id);
    let path = '';
    let labels = '';

    for (let i = from * 5; i <= to * 5; i++) {
        const pos = Math.round(origin + i * UNIT / 5) + 0.5;
        const major = i % 5 === 0;
        const start = major ? 0 : 12;
        path += vertical ? `M${start} ${pos}H16` : `M${pos} ${start}V18`;

        if (!major) continue;
        const digits = String(Math.abs(i / 5));
        if (!vertical) {
            labels += `<text x="${pos + 2}" y="12">${digits}</text>`;
            continue;
        }
        // digits are stacked on the vertical ruler
        digits.split('').forEach((digit, n) => {
            const y = pos - 3 - (digits.length - 1 - n) * 12;
            labels += `<text x="2" y="${y}">${digit}</text>`;
        });
    }
    ruler.innerHTML = `<path d="${path}"/>${labels}`;
}

drawRuler('rulerX', 41, -1, 30, false);
drawRuler('rulerY', 6, 0, 21, true);
```
